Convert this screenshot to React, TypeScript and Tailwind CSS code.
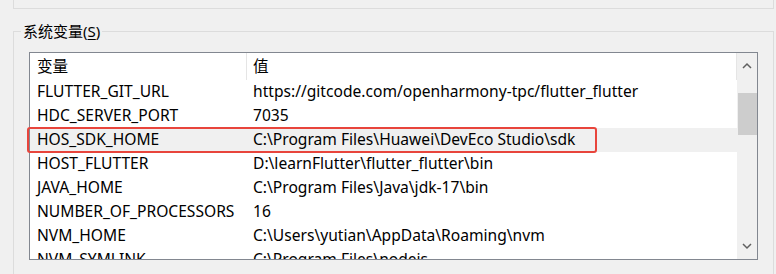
import React from 'react';

const rows: [string, string][] = [
  ['FLUTTER_GIT_URL', 'https://gitcode.com/openharmony-tpc/flutter_flutter'],
  ['HDC_SERVER_PORT', '7035'],
  ['HOS_SDK_HOME', 'C:\\Program Files\\Huawei\\DevEco Studio\\sdk'],
  ['HOST_FLUTTER', 'D:\\learnFlutter\\flutter_flutter\\bin'],
  ['JAVA_HOME', 'C:\\Program Files\\Java\\jdk-17\\bin'],
  ['NUMBER_OF_PROCESSORS', '16'],
  ['NVM_HOME', 'C:\\Users\\yutian\\AppData\\Roaming\\nvm'],
  ['NVM_SYMLINK', 'C:\\Program Files\\nodejs'],
];

const App: React.FC = () => {
  return (
    <div
      className="w-[776px] h-[274px] overflow-hidden bg-[#f0f0f0] text-black"
      style={{ fontFamily: '"Noto Sans", "Noto Sans CJK SC", sans-serif' }}
    >
      {/* bottom edge of the group above */}
      <div className="ml-[13px] w-[761px] h-[9px] border-l border-r border-b border-[#dcdcdc]" />

      {/* System variables group */}
      <fieldset className="ml-[13px] mt-[14px] w-[761px] h-[300px] border border-[#dcdcdc] px-[15px] pt-[13px]">
        <legend className="-ml-[8px] px-[2px] text-[15px] leading-[16px]">
          系统变量(<span className="underline underline-offset-2">S</span>)
        </legend>

        <div className="relative flex h-[208px] border border-[#828790] bg-white">
          {/* table */}
          <div className="flex-1 flex flex-col overflow-hidden text-[15.6px]">
            <div className="flex h-[27px] shrink-0 items-center">
              <div className="w-[217px] h-full flex items-center pl-[7px] border-r border-[#e5e5e5]">变量</div>
              <div className="flex-1 h-full flex items-center pl-[6px] border-r border-[#e5e5e5]">值</div>
            </div>
            {rows.map(([name, value], i) => (
              <div
                key={name}
                className={`flex h-[24px] items-center shrink-0 ${i === 2 ? 'bg-[#f0f0f0]' : ''}`}
              >
                <div className="w-[217px] pl-[7px] whitespace-nowrap">{name}</div>
                <div className="flex-1 pl-[6px] whitespace-nowrap">{value}</div>
              </div>
            ))}
          </div>

          {/* scrollbar */}
          <div className="w-[20px] bg-[#f0f0f0] flex flex-col items-center">
            <svg width="20" height="24" viewBox="0 0 20 24" className="shrink-0">
              <path d="M6 15 L10 11 L14 15" fill="none" stroke="#606060" strokeWidth="1.5" />
            </svg>
            <div className="w-[19px] h-[42px] mt-[16px] bg-[#cdcdcd]" />
            <div className="flex-1" />
            <svg width="20" height="24" viewBox="0 0 20 24" className="shrink-0">
              <path d="M6 9 L10 13 L14 9" fill="none" stroke="#606060" strokeWidth="1.5" />
            </svg>
          </div>

          {/* annotation highlight */}
          <div className="absolute left-[-3px] top-[74px] w-[570px] h-[26px] border-2 border-[#e8453c] rounded-[3px]" />
        </div>
      </fieldset>
    </div>
  );
};

export default App;
